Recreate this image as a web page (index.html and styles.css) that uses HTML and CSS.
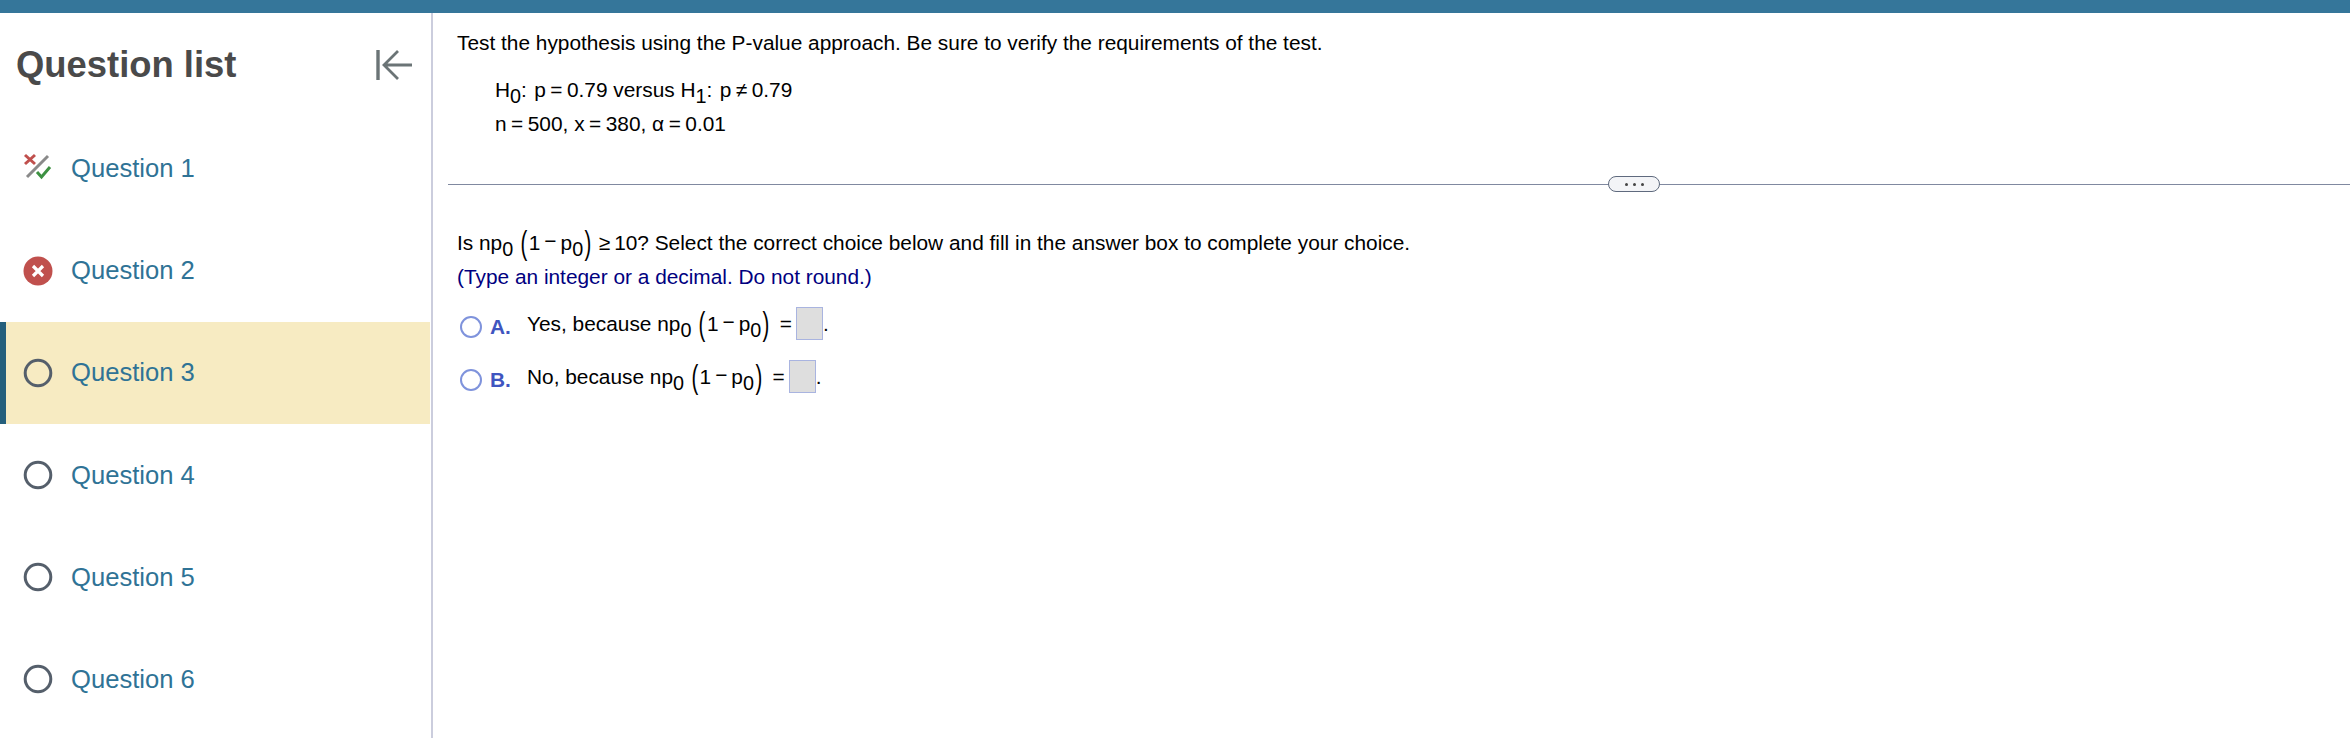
FILE: index.html
```html
<!DOCTYPE html>
<html lang="en">
<head>
  <meta charset="UTF-8">
  <title>Question list</title>
  <link rel="stylesheet" href="styles.css">
</head>
<body>
  <div class="topbar"></div>
  <div class="layout">
    <aside class="sidebar">
      <div class="side-head">
        <h1>Question list</h1>
        <svg class="collapse" width="38" height="34" viewBox="0 0 38 34" fill="none" stroke="#6b7476">
          <path d="M2 2V32" stroke-width="3.4"/>
          <path d="M36 17H9M22 3L8 17L22 31" stroke-width="2.8"/>
        </svg>
      </div>
      <ul class="qlist">
        <li>
          <svg class="qicon" width="30" height="30" viewBox="0 0 30 30" fill="none">
            <path d="M2 2L12 11M12 2L2 11" stroke="#c0504d" stroke-width="3"/>
            <path d="M4 24L25 3" stroke="#8a8a8a" stroke-width="3"/>
            <path d="M14 19L18.500 24L27 14" stroke="#3d9142" stroke-width="3"/>
          </svg>
          <a>Question 1</a>
        </li>
        <li>
          <svg class="qicon" width="30" height="30" viewBox="0 0 30 30" fill="none">
            <circle cx="15" cy="15" r="14.5" fill="#c0504d"/>
            <path d="M10 10L20 20M20 10L10 20" stroke="#fff" stroke-width="3.2"/>
          </svg>
          <a>Question 2</a>
        </li>
        <li class="current">
          <svg class="qicon" width="30" height="30" viewBox="0 0 30 30" fill="none"><circle cx="15" cy="15" r="12.8" stroke="#555f6b" stroke-width="3"/></svg>
          <a>Question 3</a>
        </li>
        <li>
          <svg class="qicon" width="30" height="30" viewBox="0 0 30 30" fill="none"><circle cx="15" cy="15" r="12.8" stroke="#555f6b" stroke-width="3"/></svg>
          <a>Question 4</a>
        </li>
        <li>
          <svg class="qicon" width="30" height="30" viewBox="0 0 30 30" fill="none"><circle cx="15" cy="15" r="12.8" stroke="#555f6b" stroke-width="3"/></svg>
          <a>Question 5</a>
        </li>
        <li>
          <svg class="qicon" width="30" height="30" viewBox="0 0 30 30" fill="none"><circle cx="15" cy="15" r="12.8" stroke="#555f6b" stroke-width="3"/></svg>
          <a>Question 6</a>
        </li>
      </ul>
    </aside>

    <main class="content">
      <section class="top-part">
        <p class="line">Test the hypothesis using the P-value approach. Be sure to verify the requirements of the test.</p>
        <div class="given">
          <p class="line">H<sub>0</sub><span class="gap-s">:</span> p<span class="op">=</span>0.79 versus H<sub>1</sub><span class="gap-s">:</span> p<span class="op">≠</span>0.79</p>
          <p class="line">n<span class="op">=</span>500, x<span class="op">=</span>380, α<span class="op">=</span>0.01</p>
        </div>
      </section>

      <div class="divider">
        <button class="more"><i></i><i></i><i></i></button>
      </div>

      <section class="bottom-part">
        <p class="line">Is np<sub>0</sub> <span class="paren">(</span>1<span class="op minus">−</span>p<sub>0</sub><span class="paren">)</span> <span class="ge">≥</span>10? Select the correct choice below and fill in the answer box to complete your choice.</p>
        <p class="line hint">(Type an integer or a decimal. Do not round.)</p>
        <div class="choice first">
          <span class="radio"></span>
          <b class="letter">A.</b>
          <span class="choice-text">Yes, because np<sub>0</sub> <span class="paren">(</span>1<span class="op minus">−</span>p<sub>0</sub><span class="paren">)</span> <span class="eq">=</span><span class="answer"></span>.</span>
        </div>
        <div class="choice">
          <span class="radio"></span>
          <b class="letter">B.</b>
          <span class="choice-text">No, because np<sub>0</sub> <span class="paren">(</span>1<span class="op minus">−</span>p<sub>0</sub><span class="paren">)</span> <span class="eq">=</span><span class="answer"></span>.</span>
        </div>
      </section>
    </main>
  </div>
</body>
</html>
```

FILE: styles.css
```css
* {
  box-sizing: border-box;
}

html, body {
  height: 100%;
}

body {
  margin: 0;
  font-family: "Liberation Sans", Arial, sans-serif;
  background: white;
  color: #000;
  overflow: hidden;
}

.topbar {
  height: 13px;
  background: #35769a;
}

.layout {
  display: flex;
  height: 725px;
}

.sidebar {
  width: 433px;
  flex-shrink: 0;
  border-right: 2px solid #cbcddd;
}

.side-head {
  height: 104.4px;
  padding: 0 17px 0 16px;
  display: flex;
  align-items: center;
  justify-content: space-between;
}

h1 {
  margin: 0;
  font-size: 36.4px;
  font-weight: bold;
  color: #4a4a4a;
}

.qlist {
  list-style: none;
  margin: 0;
  padding: 0;
}

.qlist li {
  height: 102.2px;
  padding-left: 23px;
  display: flex;
  align-items: center;
  gap: 18px;
  font-size: 25.6px;
  color: #2f7396;
}

.qlist li.current {
  background: #f7ebc2;
  border-left: 6px solid #255f7c;
  padding-left: 17px;
  margin-right: 1px;
}

.qicon {
  flex-shrink: 0;
}

.content {
  flex: 1;
  padding-left: 15px;
  font-size: 20.85px;
}

.top-part, .bottom-part {
  padding-left: 9px;
}

.line {
  margin: 0;
  line-height: 34px;
  white-space: nowrap;
}

.top-part {
  padding-top: 13px;
}

.given {
  margin-top: 13px;
  padding-left: 38px;
}

sub {
  font-size: 0.95em;
  line-height: 0;
  vertical-align: -0.3em;
}

.op {
  margin: 0 4.500px;
}

.minus {
  position: relative;
  top: -2px;
  margin: 0 4px;
}

.eq {
  margin-left: 3px;
}

.gap-s {
  margin-right: 1.500px;
}

.ge {
  margin-right: 4px;
}

.paren {
  display: inline-block;
  font-size: 1.4em;
  line-height: 0;
  vertical-align: -0.08em;
  transform: scale(0.7, 1.15);
}

.divider {
  margin-top: 26px;
  height: 34px;
  display: flex;
  align-items: center;
  padding-left: 1160px;
  background: linear-gradient(#8089a0, #8089a0) center / 100% 1px no-repeat;
}

.more {
  width: 52px;
  height: 16px;
  padding: 0;
  border: 1.5px solid #5f6a7e;
  border-radius: 8px;
  background: #f3f4f7;
  display: flex;
  align-items: center;
  justify-content: center;
  gap: 5px;
}

.more i {
  width: 3px;
  height: 3px;
  border-radius: 50%;
  background: #444;
}

.bottom-part {
  padding-top: 25px;
}

.hint {
  color: #00007f;
}

.choice {
  display: flex;
  align-items: center;
  height: 53px;
  white-space: nowrap;
}

.choice.first {
  margin-top: 6px;
}

.radio {
  width: 22px;
  height: 22px;
  margin: 0 8px 0 3px;
  flex-shrink: 0;
  border: 2.5px solid #7f93dc;
  border-radius: 50%;
}

.letter {
  width: 37px;
  color: #3f55c0;
}

.choice-text {
  position: relative;
  top: -1px;
}

.answer {
  display: inline-block;
  width: 27px;
  height: 33px;
  margin-left: 4px;
  margin-bottom: 4px;
  vertical-align: middle;
  background: #dedede;
  border: 1px solid #a9b4e0;
}
```
